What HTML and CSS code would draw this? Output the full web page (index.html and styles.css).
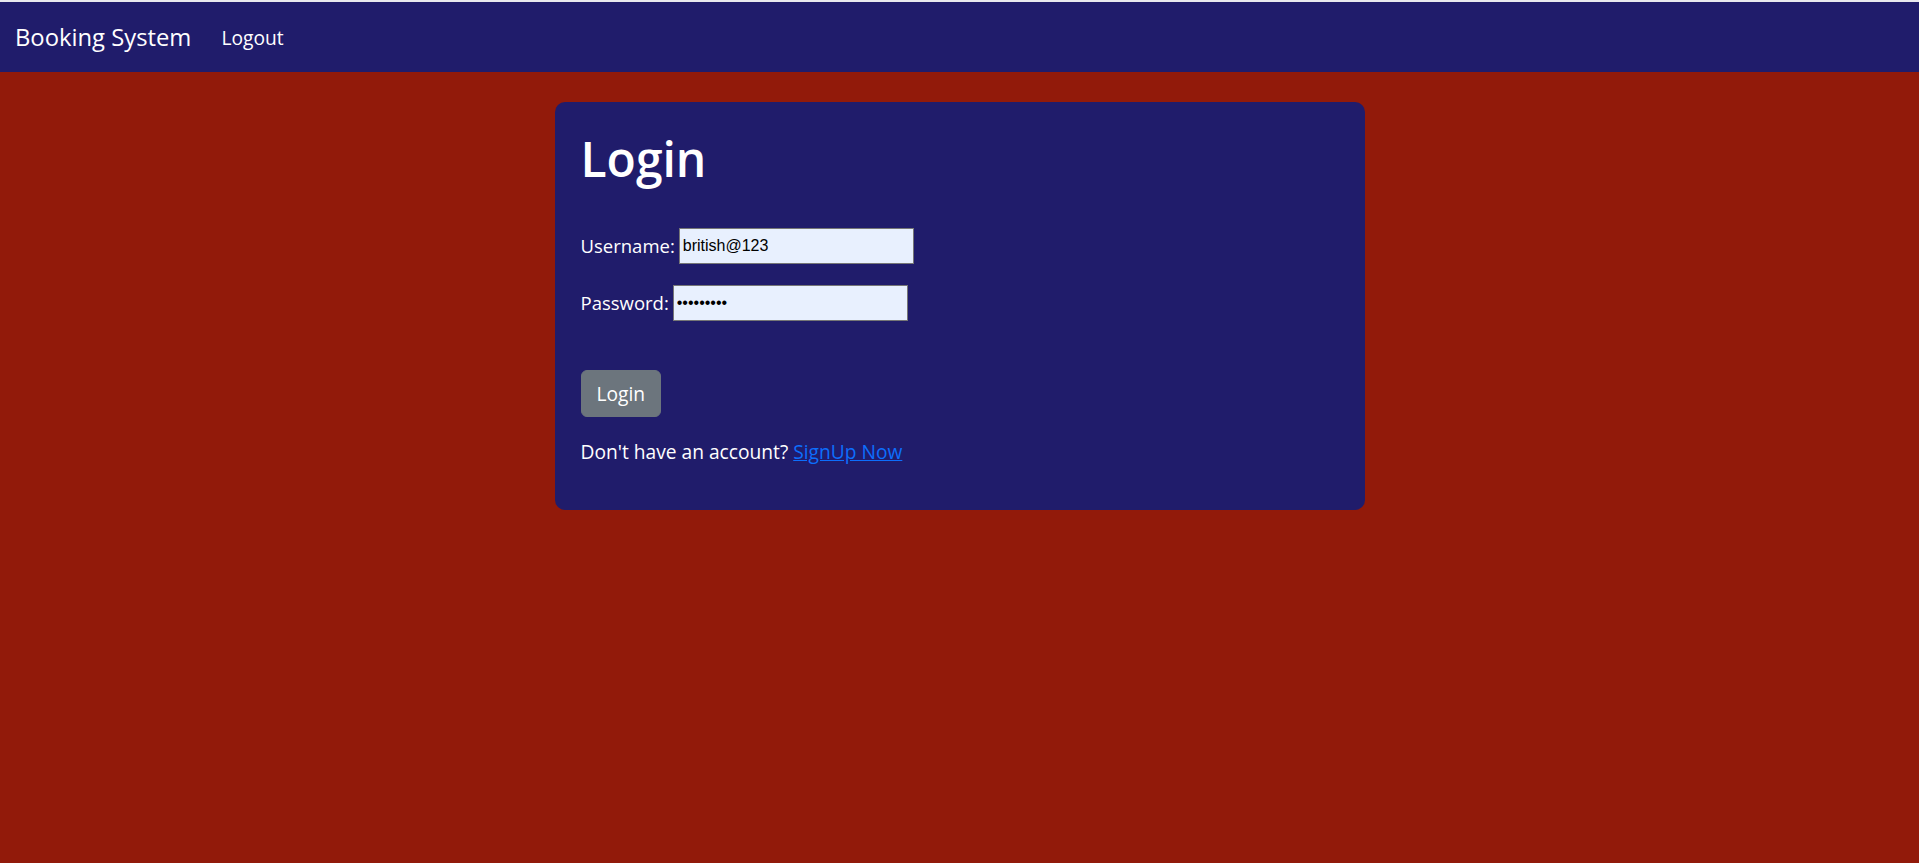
FILE: index.html
```html
<!DOCTYPE html>
<html lang="en">
<head>
<meta charset="utf-8">
<title>Booking System - Login</title>
<link rel="stylesheet" href="styles.css">
</head>
<body>
<nav class="navbar">
  <a class="brand" href="#">Booking System</a>
  <a class="nav-link" href="#">Logout</a>
</nav>
<main class="page">
  <div class="card">
    <h1 class="title">Login</h1>
    <form class="login-form">
      <div class="field"><label for="u">Username:</label> <input id="u" class="text-input" type="text" value="british@123"></div>
      <div class="field"><label for="p">Password:</label> <input id="p" class="text-input" type="password" value="123456789"></div>
      <button class="btn" type="button">Login</button>
      <p class="signup">Don't have an account? <a class="signup-link" href="#">SignUp Now</a></p>
    </form>
  </div>
</main>
</body>
</html>
```
FILE: styles.css
```css
html, body {
  margin: 0;
  padding: 0;
}
body {
  background: #921a0a;
  font-family: "Open Sans", "Noto Sans", sans-serif;
  font-size: 19.2px;
  color: #fff;
  min-height: 863px;
}
.navbar {
  background: #201c6b;
  height: 72px;
  box-sizing: border-box;
  border-top: 2px solid #e8e8ee;
  display: flex;
  align-items: center;
  padding: 0 15px;
}
.brand {
  color: #fff;
  text-decoration: none;
  font-size: 23.8px;
  margin-right: 20px;
}
.nav-link {
  color: #fff;
  text-decoration: none;
  font-size: 19.2px;
  padding: 0 10px;
}
.page {
  padding-top: 30px;
}
.card {
  width: 810px;
  box-sizing: border-box;
  margin: 0 auto;
  background: #201c6b;
  border-radius: 10px;
  padding: 28px 26px 44px;
}
.title {
  margin: 0 0 40px;
  font-size: 48px;
  font-weight: 600;
  line-height: 1.2;
}
.field {
  display: flex;
  align-items: center;
  gap: 4px;
  margin-bottom: 21px;
  font-size: 18.5px;
}
.text-input {
  width: 235px;
  height: 36px;
  box-sizing: border-box;
  border: 1px solid #767676;
  background: #e8f0fe;
  font-family: "Liberation Sans", Arial, sans-serif;
  font-size: 16px;
  padding: 0 3px;
  color: #000;
}
.btn {
  margin-top: 49px;
  display: block;
  background: #6c757d;
  color: #fff;
  border: 1px solid #6c757d;
  border-radius: 6px;
  height: 47px;
  padding: 0 15px;
  font-family: inherit;
  font-size: 19.2px;
}
.signup {
  margin: 21px 0 0;
  font-size: 19.2px;
  line-height: 1.5;
}
.signup-link {
  color: #0d6efd;
}
```
